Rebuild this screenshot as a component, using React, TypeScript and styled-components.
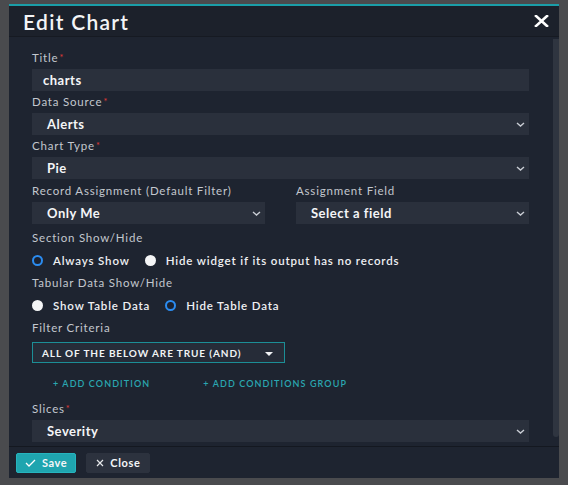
import React from 'react';
import styled, { createGlobalStyle } from 'styled-components';

const GlobalStyle = createGlobalStyle`
  html, body {
    margin: 0;
    padding: 0;
    background: #4a4b4e;
    font-family: Lato, "Open Sans", sans-serif;
  }
  * { box-sizing: border-box; }
`;

const Page = styled.div`
  padding: 4px 9px 7px 9px;
`;

const Modal = styled.div`
  width: 550px;
  height: 474px;
  background: #1e2430;
  border-top: 2px solid #1b9ea8;
  display: flex;
  flex-direction: column;
`;

const Header = styled.div`
  height: 31px;
  flex: none;
  display: flex;
  align-items: center;
  justify-content: space-between;
  padding: 0 10px 0 14px;
  background: #1c212b;
  border-bottom: 1px solid #161a22;
`;

const Title = styled.h2`
  margin: 0;
  font-size: 21px;
  font-weight: 600;
  letter-spacing: 1.3px;
  color: #f3f4f6;
`;

const IconButton = styled.button`
  border: 0;
  background: none;
  padding: 0;
  display: flex;
  cursor: pointer;
`;

const BodyWrap = styled.div`
  flex: 1;
  min-height: 0;
  display: flex;
`;

const Body = styled.div`
  flex: 1;
  min-width: 0;
  overflow: hidden;
  padding: 13px 24px 0 23px;
`;

const ScrollThumb = styled.div`
  width: 6px;
  flex: none;
  margin: 2px 0 9px;
  border-radius: 0 0 3px 3px;
  background: #2f3540;
`;

const Field = styled.div<{ $mt?: number }>`
  display: flex;
  flex-direction: column;
  margin-top: ${p => p.$mt ?? 3}px;
`;

const Row = styled.div`
  display: grid;
  grid-template-columns: 1fr 1fr;
  column-gap: 31px;
  margin-top: 4px;
  & > ${Field} { margin-top: 0; }
`;

const Label = styled.label<{ $mb?: number }>`
  font-size: 11.5px;
  line-height: 15px;
  letter-spacing: 0.8px;
  color: #c3c7ce;
  margin-bottom: ${p => p.$mb ?? 4}px;
`;

const Star = styled.span`
  color: #e23a36;
  font-size: 9px;
  vertical-align: top;
  margin-left: 1px;
`;

const TextInput = styled.div`
  height: 22px;
  background: #2a303c;
  color: #f4f5f7;
  font-size: 13px;
  font-weight: 700;
  letter-spacing: 0.5px;
  display: flex;
  align-items: center;
  padding-left: 11px;
`;

const Select = styled(TextInput)`
  padding: 0 3px 0 15px;
  justify-content: space-between;
`;

const ChevronBox = styled.span`
  width: 11px;
  display: flex;
  justify-content: center;
`;

const RadioRow = styled.div`
  height: 20px;
  display: flex;
  align-items: center;
  gap: 15px;
  margin-top: 1px;
`;

const RadioOption = styled.span`
  display: flex;
  align-items: center;
  gap: 10px;
  font-size: 11.5px;
  font-weight: 600;
  letter-spacing: 0.85px;
  color: #eef0f3;
`;

const RadioDot = styled.span<{ $on?: boolean }>`
  width: 11px;
  height: 11px;
  border-radius: 50%;
  background: ${p => (p.$on ? '#1b2230' : '#f4f5f6')};
  border: ${p => (p.$on ? '2.5px solid #2b8cf0' : '0')};
`;

const FilterSelect = styled.div`
  width: 253px;
  height: 21px;
  border: 1px solid #1c8e96;
  background: #262c38;
  display: flex;
  align-items: center;
  justify-content: space-between;
  padding: 0 11px 0 9px;
  color: #f1f3f5;
  font-size: 10px;
  font-weight: 700;
  letter-spacing: 0.9px;
  text-transform: uppercase;
`;

const Caret = styled.span`
  width: 0;
  height: 0;
  border-left: 4px solid transparent;
  border-right: 4px solid transparent;
  border-top: 4px solid #f1f3f5;
  margin-top: 2px;
`;

const LinkRow = styled.div`
  height: 20px;
  display: flex;
  align-items: center;
  gap: 53px;
  padding-left: 21px;
  margin-top: 10px;
`;

const AddLink = styled.span`
  color: #2aa7b1;
  font-size: 9px;
  letter-spacing: 1.1px;
  text-transform: uppercase;
  font-weight: 600;
`;

const Footer = styled.div`
  height: 32px;
  flex: none;
  border-top: 1px solid #141820;
  display: flex;
  align-items: center;
  gap: 10px;
  padding: 0 7px;
`;

const Button = styled.button<{ $primary?: boolean }>`
  height: 20px;
  display: flex;
  align-items: center;
  gap: 6px;
  padding: 0 ${p => (p.$primary ? '8px' : '9px')};
  font-family: inherit;
  font-size: 11px;
  font-weight: 700;
  letter-spacing: 0.6px;
  color: #f4f6f8;
  background: ${p => (p.$primary ? '#1fa5af' : '#2c323e')};
  border: 1px solid ${p => (p.$primary ? '#26b4be' : '#2c323e')};
  border-radius: 2px;
`;

const Chevron = () => (
  <ChevronBox>
    <svg width="9" height="5" viewBox="0 0 9 5">
      <polyline points="1,1 4.5,4 8,1" fill="none" stroke="#c9cdd4" strokeWidth="1.4" />
    </svg>
  </ChevronBox>
);

const Required = () => <Star>*</Star>;

const SelectField = ({ value }: { value: string }) => (
  <Select>
    <span>{value}</span>
    <Chevron />
  </Select>
);

export default function App() {
  return (
    <>
      <GlobalStyle />
      <Page>
        <Modal>
          <Header>
            <Title>Edit Chart</Title>
            <IconButton aria-label="close">
              <svg width="15" height="12" viewBox="0 0 15 12">
                <path d="M2 1 L13 11 M13 1 L2 11" stroke="#ffffff" strokeWidth="2.6" strokeLinecap="square" />
              </svg>
            </IconButton>
          </Header>
          <BodyWrap>
            <Body>
              <Field $mt={0}>
                <Label>Title<Required /></Label>
                <TextInput>charts</TextInput>
              </Field>
              <Field>
                <Label>Data Source<Required /></Label>
                <SelectField value="Alerts" />
              </Field>
              <Field>
                <Label>Chart Type<Required /></Label>
                <SelectField value="Pie" />
              </Field>
              <Row>
                <Field>
                  <Label>Record Assignment (Default Filter)</Label>
                  <SelectField value="Only Me" />
                </Field>
                <Field>
                  <Label>Assignment Field</Label>
                  <SelectField value="Select a field" />
                </Field>
              </Row>
              <Field $mt={6}>
                <Label>Section Show/Hide</Label>
                <RadioRow>
                  <RadioOption><RadioDot $on />Always Show</RadioOption>
                  <RadioOption><RadioDot />Hide widget if its output has no records</RadioOption>
                </RadioRow>
              </Field>
              <Field $mt={5}>
                <Label>Tabular Data Show/Hide</Label>
                <RadioRow>
                  <RadioOption><RadioDot />Show Table Data</RadioOption>
                  <RadioOption><RadioDot $on />Hide Table Data</RadioOption>
                </RadioRow>
              </Field>
              <Field $mt={5}>
                <Label $mb={7}>Filter Criteria</Label>
                <FilterSelect>
                  <span>All of the below are true (AND)</span>
                  <Caret />
                </FilterSelect>
                <LinkRow>
                  <AddLink>+ Add Condition</AddLink>
                  <AddLink>+ Add Conditions Group</AddLink>
                </LinkRow>
              </Field>
              <Field $mt={8}>
                <Label>Slices<Required /></Label>
                <SelectField value="Severity" />
              </Field>
            </Body>
            <ScrollThumb />
          </BodyWrap>
          <Footer>
            <Button $primary>
              <svg width="11" height="8" viewBox="0 0 11 8">
                <polyline points="1,4 4,7 10,1" fill="none" stroke="#ffffff" strokeWidth="1.3" />
              </svg>
              Save
            </Button>
            <Button>
              <svg width="8" height="8" viewBox="0 0 8 8">
                <path d="M1 1 L7 7 M7 1 L1 7" stroke="#e6e8eb" strokeWidth="1.2" />
              </svg>
              Close
            </Button>
          </Footer>
        </Modal>
      </Page>
    </>
  );
}
